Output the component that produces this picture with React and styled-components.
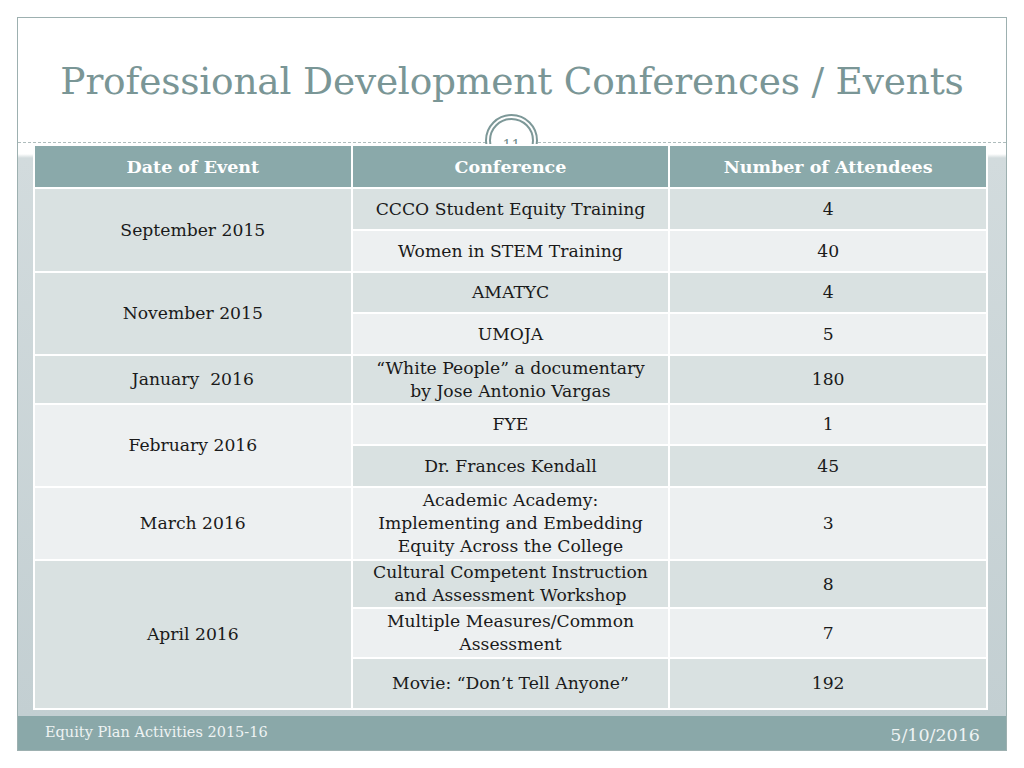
import React from 'react'
import styled, { createGlobalStyle } from 'styled-components'

const GlobalStyle = createGlobalStyle`
    html, body {
        margin: 0;
        padding: 0;
        background: #ffffff;
    }
    body {
        font-family: "DejaVu Serif", "Liberation Serif", serif;
    }
`

const Page = styled.div`
    width: 1024px;
    height: 768px;
    padding: 17px 0 0 17px;
    box-sizing: border-box;
`

const Slide = styled.div`
    width: 990px;
    height: 734px;
    box-sizing: border-box;
    border: 1px solid #9db0b0;
    display: flex;
    flex-direction: column;
    background: #ffffff;
`

const TitleBar = styled.div`
    height: 124px;
    display: flex;
    align-items: center;
    justify-content: center;
    padding-top: 2px;
    box-sizing: border-box;
`

const Title = styled.h1`
    margin: 0;
    font-family: "DejaVu Serif", serif;
    font-weight: normal;
    font-size: 37.5px;
    color: #7a9696;
    letter-spacing: -0.2px;
`

const Divider = styled.div`
    position: relative;
    height: 0;
    border-top: 1px dashed #aebcbc;
`

const Badge = styled.div`
    position: absolute;
    left: 467px;
    top: -29px;
    width: 53px;
    height: 53px;
    box-sizing: border-box;
    border-radius: 50%;
    border: 2px solid #7d9898;
    background: #ffffff;
    display: flex;
    align-items: center;
    justify-content: center;

    &::before {
        content: '';
        position: absolute;
        inset: 2px;
        border-radius: 50%;
        border: 2px solid #7d9898;
    }
`

const BadgeNumber = styled.span`
    font-family: "DejaVu Serif", serif;
    font-size: 14px;
    color: #6f8c8c;
    padding-top: 9px;
`

const Content = styled.div`
    flex: 1;
    padding: 1px 18px 5px 15px;
    background: linear-gradient(to bottom, #ffffff 0px, #ffffff 11px, #d2dbdd 15px, #c3cfd2 100%);
`

const Table = styled.table`
    position: relative;
    z-index: 1;
    width: 955px;
    border-collapse: collapse;
    table-layout: fixed;
    border: 2px solid #ffffff;
`

const HeadCell = styled.th`
    height: 41px;
    padding: 0;
    background: #8aa9aa;
    color: #ffffff;
    font-family: "DejaVu Serif", serif;
    font-weight: bold;
    font-size: 17.5px;
    text-align: center;
    border: 2px solid #ffffff;
    border-top: none;
`

const Cell = styled.td`
    height: ${({ $h }) => $h}px;
    padding: 0 4px;
    background: ${({ $dark }) => ($dark ? '#d9e1e1' : '#edf0f1')};
    color: #1a1a1a;
    font-family: "DejaVu Serif", serif;
    font-size: 17.2px;
    line-height: 23px;
    text-align: center;
    vertical-align: middle;
    white-space: nowrap;
    border: 2px solid #ffffff;
`

const Footer = styled.div`
    height: 34px;
    background: #8aa8a9;
    display: flex;
    align-items: center;
    justify-content: space-between;
    padding: 0 26px 0 27px;
`

const FooterText = styled.span`
    font-family: "DejaVu Serif", serif;
    font-size: 14.5px;
    color: #eef3f3;
    margin-top: -2px;
`

const FooterDate = styled.span`
    font-family: "DejaVu Serif", serif;
    font-size: 17.5px;
    color: #eef3f3;
    margin-top: 4px;
`

const groups = [
    {
        date: 'September 2015',
        dark: true,
        items: [
            { name: ['CCCO Student Equity Training'], count: '4', dark: true, h: 40 },
            { name: ['Women in STEM Training'], count: '40', dark: false, h: 40 },
        ],
    },
    {
        date: 'November 2015',
        dark: true,
        items: [
            { name: ['AMATYC'], count: '4', dark: true, h: 39 },
            { name: ['UMOJA'], count: '5', dark: false, h: 40 },
        ],
    },
    {
        date: 'January\u00a0 2016',
        dark: true,
        items: [
            { name: ['\u201cWhite People\u201d a documentary', 'by Jose Antonio Vargas'], count: '180', dark: true, h: 47 },
        ],
    },
    {
        date: 'February 2016',
        dark: false,
        items: [
            { name: ['FYE'], count: '1', dark: false, h: 39 },
            { name: ['Dr. Frances Kendall'], count: '45', dark: true, h: 40 },
        ],
    },
    {
        date: 'March 2016',
        dark: false,
        items: [
            { name: ['Academic Academy:', 'Implementing and Embedding', 'Equity Across the College'], count: '3', dark: false, h: 71 },
        ],
    },
    {
        date: 'April 2016',
        dark: true,
        items: [
            { name: ['Cultural Competent Instruction', 'and Assessment Workshop'], count: '8', dark: true, h: 46 },
            { name: ['Multiple Measures/Common', 'Assessment'], count: '7', dark: false, h: 48 },
            { name: ['Movie: \u201cDon\u2019t Tell Anyone\u201d'], count: '192', dark: true, h: 49 },
        ],
    },
]

const Lines = ({ lines }) =>
    lines.map((line, i) => (
        <React.Fragment key={i}>
            {i > 0 && <br />}
            {line}
        </React.Fragment>
    ))

const App = () => {
    return (
        <Page>
            <GlobalStyle />
            <Slide>
                <TitleBar>
                    <Title>Professional Development Conferences / Events</Title>
                </TitleBar>
                <Divider>
                    <Badge>
                        <BadgeNumber>11</BadgeNumber>
                    </Badge>
                </Divider>
                <Content>
                    <Table>
                        <thead>
                            <tr>
                                <HeadCell>Date of Event</HeadCell>
                                <HeadCell>Conference</HeadCell>
                                <HeadCell>Number of Attendees</HeadCell>
                            </tr>
                        </thead>
                        <tbody>
                            {groups.map((group) =>
                                group.items.map((item, i) => (
                                    <tr key={group.date + i}>
                                        {i === 0 && (
                                            <Cell rowSpan={group.items.length} $dark={group.dark}>
                                                {group.date}
                                            </Cell>
                                        )}
                                        <Cell $dark={item.dark} $h={item.h}>
                                            <Lines lines={item.name} />
                                        </Cell>
                                        <Cell $dark={item.dark} $h={item.h}>
                                            {item.count}
                                        </Cell>
                                    </tr>
                                ))
                            )}
                        </tbody>
                    </Table>
                </Content>
                <Footer>
                    <FooterText>Equity Plan Activities 2015-16</FooterText>
                    <FooterDate>5/10/2016</FooterDate>
                </Footer>
            </Slide>
        </Page>
    )
}

export default App
